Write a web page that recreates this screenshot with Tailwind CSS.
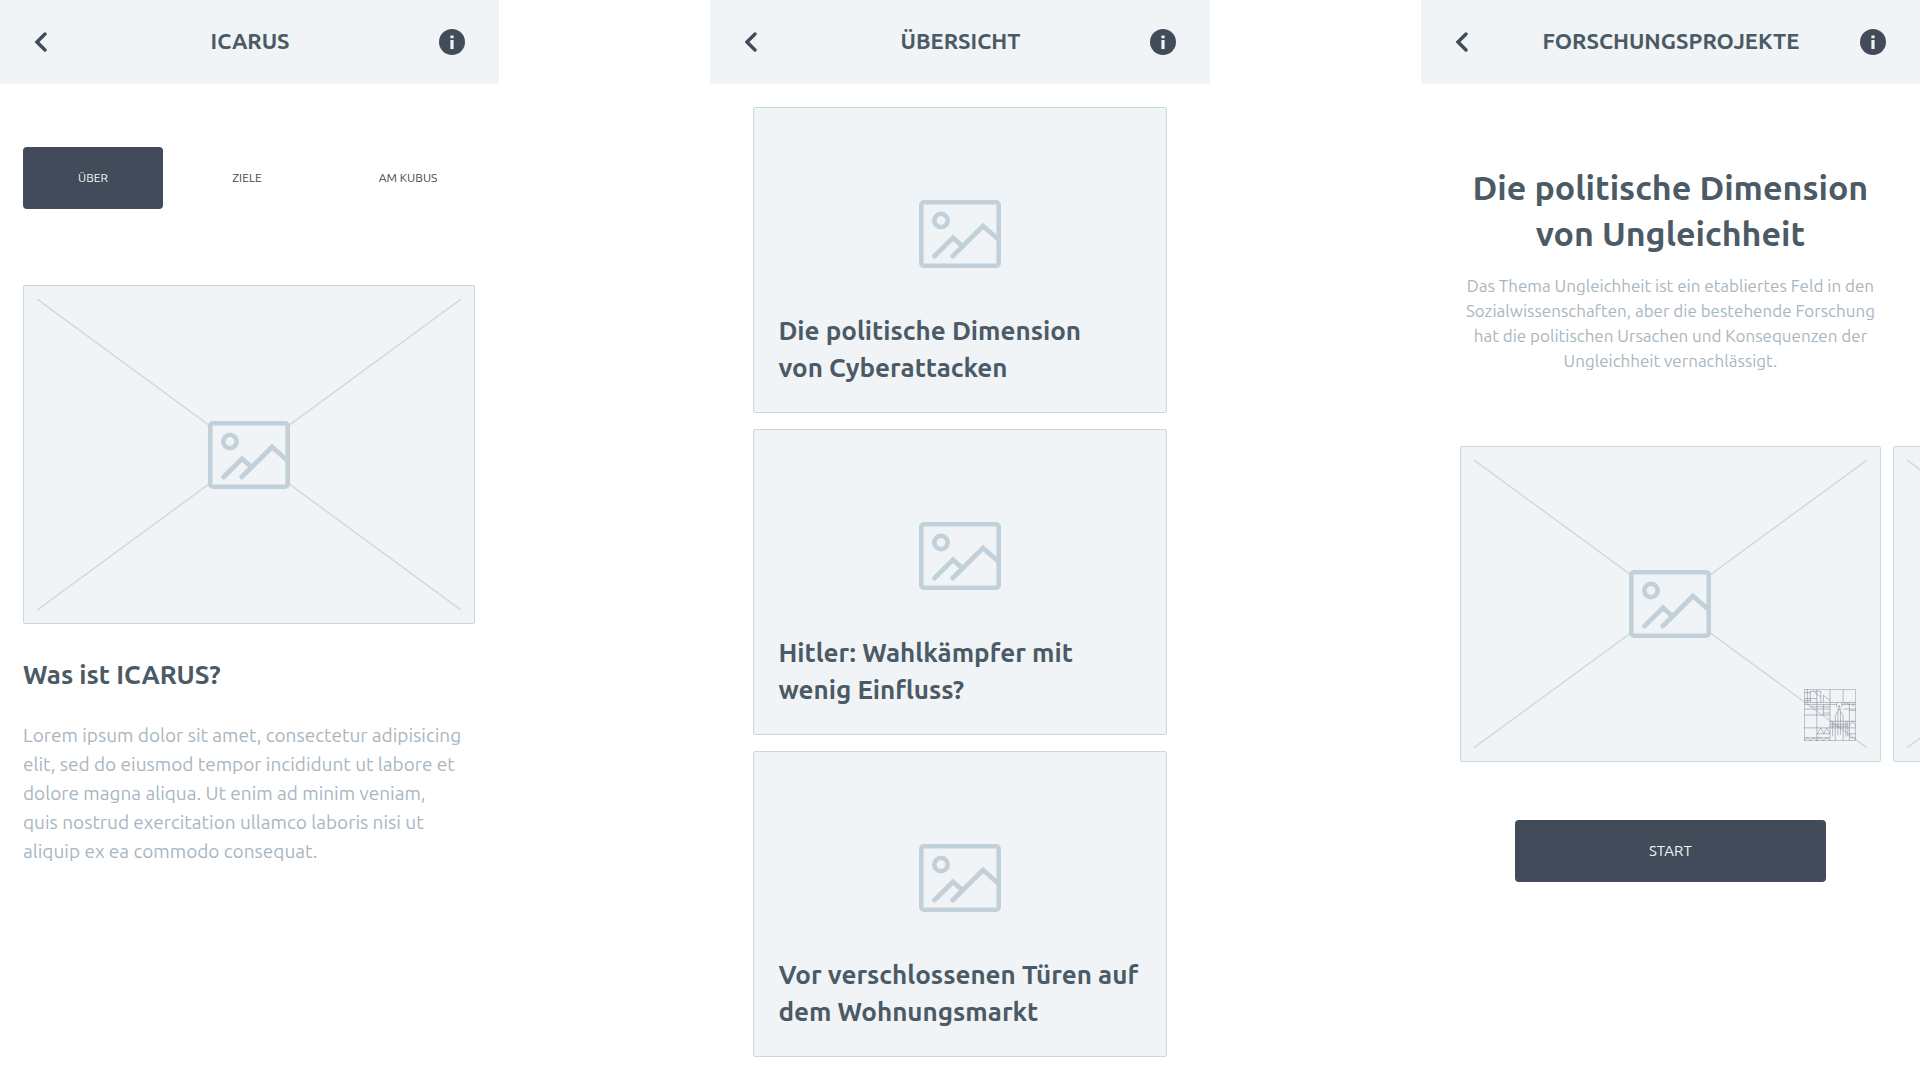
<!DOCTYPE html>
<html lang="de">
<head>
    <meta charset="UTF-8">
    <title>ICARUS</title>
    <meta name="viewport" content="width=device-width, initial-scale=1.0">
    <!-- Tailwind CSS CDN -->
    <script src="https://cdn.jsdelivr.net/npm/@tailwindcss/browser@4"></script>
</head>
<body class="bg-white min-h-screen overflow-x-hidden font-['Ubuntu','Noto_Sans',sans-serif] text-[#4b5a65]">
    <!-- Shared icons -->
    <svg class="hidden">
        <symbol id="icon-back" viewBox="0 0 12 20">
            <path d="M10 2 2 10l8 8" fill="none" stroke="#424b5a" stroke-width="3.4" stroke-linecap="round" />
        </symbol>
        <symbol id="icon-info" viewBox="0 0 26 26">
            <circle cx="13" cy="13" r="13" fill="#424b5a" />
            <path d="M11.4 6.6h3.2v2.6h-3.2zM11.4 11h3.2v9h-3.2z" fill="#f0f4f7" />
        </symbol>
        <symbol id="icon-image" viewBox="0 0 82 68">
            <rect x="2.3" y="2.3" width="77.4" height="63.4" rx="2.5" fill="#f0f4f7" stroke="#c1d0d9" stroke-width="4.6" />
            <circle cx="22" cy="20.5" r="6.7" fill="none" stroke="#c1d0d9" stroke-width="4.6" />
            <path d="M15.6 56 34 37.8l9.5 8.4M33.8 56 64 26l16 14" fill="none" stroke="#c1d0d9" stroke-width="4.8" stroke-linecap="round" />
        </symbol>
        <symbol id="kubus" viewBox="-1 -1 158 158">
            <g fill="none" stroke="#5c606f" stroke-opacity=".6" stroke-width="2">
                <path d="M0 0h156v156H0zM38 0v156M78 0v156M118 0v40M118 80v76M0 40h156M0 60h78M118 60h38M0 78h78M0 117h156M136 135h20M38 135h40" />
                <path d="M9 0v40M0 10h20M0 28h38M0 34h20M18 6h32v34M18 6v34M28 6l22 18M58 40V18l20 16M0 46h98M18 53h60M58 46v32M58 72h20" />
                <path d="M114 46h42M98 40v14M114 40v14M106 48l-4 16M106 48l4 16M118 46l8-6 10 6M137 40v116M137 64h19M148 40v12" />
                <path d="M106 60 94 80v76M106 60l12 20M102 68v70M110 68v70M86 97v46M126 97v46M132 97v46M78 97h78M78 106h54M78 112h54M137 110l9-14 10 14" />
                <path d="M40 135l10-18 9 18M59 135l9-18 10 18M0 156q9-16 18 0q9-16 20 0q9-16 20 0q9-16 20 0M0 147h78M137 147h19" />
            </g>
        </symbol>
    </svg>

    <div class="flex items-start justify-between">

        <!-- Screen 1: Icarus -->
        <section class="w-[26%]">
            <header class="grid h-21 grid-cols-[26px_1fr_26px] items-center bg-[#f0f4f7] pr-[34px] pl-[35px]">
                <button type="button" aria-label="Zurück"><svg class="h-5 w-3"><use href="#icon-back" /></svg></button>
                <h1 class="pb-[3px] text-center text-[22px] font-bold">ICARUS</h1>
                <button type="button" aria-label="Info"><svg class="size-[26px]"><use href="#icon-info" /></svg></button>
            </header>
            <main class="pr-6 pl-[23px]">
                <nav class="mt-[63px] flex text-[12px] text-[#474747]">
                    <button type="button" class="h-[62px] w-[140px] rounded bg-[#424b5a] text-[#f0f4f7]">ÜBER</button>
                    <button type="button" class="ml-3.5 h-[62px] w-[140px] rounded">ZIELE</button>
                    <button type="button" class="ml-6 h-[62px] flex-1 rounded">AM KUBUS</button>
                </nav>
                <div class="relative mt-[76px] flex aspect-4/3 items-center justify-center rounded-xs border border-[#c9d7df] bg-[#f0f4f7]">
                    <svg class="absolute inset-[13px] h-[calc(100%-26px)] w-[calc(100%-26px)]" viewBox="0 0 100 100" preserveAspectRatio="none">
                        <path d="M0 0 100 100M100 0 0 100" stroke="#cedbe1" stroke-width="1.5" vector-effect="non-scaling-stroke" />
                    </svg>
                    <svg class="relative h-[68px] w-[82px]"><use href="#icon-image" /></svg>
                </div>
                <h2 class="mt-8 text-[26px] leading-[37px] font-bold">Was ist ICARUS?</h2>
                <p class="mt-7 text-[19px] leading-[29px] whitespace-nowrap text-[#a9b6bf]">
                    Lorem ipsum dolor sit amet, consectetur adipisicing<br>
                    elit, sed do eiusmod tempor incididunt ut labore et<br>
                    dolore magna aliqua. Ut enim ad minim veniam,<br>
                    quis nostrud exercitation ullamco laboris nisi ut<br>
                    aliquip ex ea commodo consequat.
                </p>
            </main>
        </section>

        <!-- Screen 2: Übersicht -->
        <section class="w-[26%]">
            <header class="grid h-21 grid-cols-[26px_1fr_26px] items-center bg-[#f0f4f7] pr-[34px] pl-[35px]">
                <button type="button" aria-label="Zurück"><svg class="h-5 w-3"><use href="#icon-back" /></svg></button>
                <h1 class="pb-[3px] text-center text-[22px] font-bold">ÜBERSICHT</h1>
                <button type="button" aria-label="Info"><svg class="size-[26px]"><use href="#icon-info" /></svg></button>
            </header>
            <main class="flex flex-col gap-4 px-[43px] pt-[23px]">
                <a href="#cyberattacken" class="rounded-xs border border-[#c9d7df] bg-[#f0f4f7] px-6 pt-[92px] pb-[26px]">
                    <svg class="mx-auto h-[68px] w-[82px]"><use href="#icon-image" /></svg>
                    <h2 class="mt-11 text-[26px] leading-[37px] font-bold whitespace-nowrap">Die politische Dimension<br>von Cyberattacken</h2>
                </a>
                <a href="#wahlkaempfer" class="rounded-xs border border-[#c9d7df] bg-[#f0f4f7] px-6 pt-[92px] pb-[26px]">
                    <svg class="mx-auto h-[68px] w-[82px]"><use href="#icon-image" /></svg>
                    <h2 class="mt-11 text-[26px] leading-[37px] font-bold whitespace-nowrap">Hitler: Wahlkämpfer mit<br>wenig Einfluss?</h2>
                </a>
                <a href="#wohnungsmarkt" class="rounded-xs border border-[#c9d7df] bg-[#f0f4f7] px-6 pt-[92px] pb-[26px]">
                    <svg class="mx-auto h-[68px] w-[82px]"><use href="#icon-image" /></svg>
                    <h2 class="mt-11 text-[26px] leading-[37px] font-bold whitespace-nowrap">Vor verschlossenen Türen auf<br>dem Wohnungsmarkt</h2>
                </a>
            </main>
        </section>

        <!-- Screen 3: Forschungsprojekte -->
        <section class="w-[26%]">
            <header class="grid h-21 grid-cols-[26px_1fr_26px] items-center bg-[#f0f4f7] pr-[34px] pl-[35px]">
                <button type="button" aria-label="Zurück"><svg class="h-5 w-3"><use href="#icon-back" /></svg></button>
                <h1 class="pb-[3px] text-center text-[22px] font-bold">FORSCHUNGSPROJEKTE</h1>
                <button type="button" aria-label="Info"><svg class="size-[26px]"><use href="#icon-info" /></svg></button>
            </header>
            <main class="text-center">
                <h2 class="mt-20 text-[34px] leading-[46px] font-bold whitespace-nowrap">Die politische Dimension<br>von Ungleichheit</h2>
                <p class="mt-[17px] text-[17px] leading-[25px] whitespace-nowrap text-[#a9b6bf]">
                    Das Thema Ungleichheit ist ein etabliertes Feld in den<br>
                    Sozialwissenschaften, aber die bestehende Forschung<br>
                    hat die politischen Ursachen und Konsequenzen der<br>
                    Ungleichheit vernachlässigt.
                </p>
                <div class="mt-[73px] flex gap-3 overflow-hidden pl-[39px]">
                    <div class="relative flex aspect-4/3 w-[421px] shrink-0 items-center justify-center rounded-xs border border-[#c9d7df] bg-[#f0f4f7]">
                        <svg class="absolute inset-[13px] h-[calc(100%-26px)] w-[calc(100%-26px)]" viewBox="0 0 100 100" preserveAspectRatio="none">
                            <path d="M0 0 100 100M100 0 0 100" stroke="#cedbe1" stroke-width="1.5" vector-effect="non-scaling-stroke" />
                        </svg>
                        <svg class="relative h-[68px] w-[82px]"><use href="#icon-image" /></svg>
                        <svg class="absolute right-6 bottom-5 size-[52px]"><use href="#kubus" /></svg>
                    </div>
                    <div class="relative flex aspect-4/3 w-[421px] shrink-0 items-center justify-center rounded-xs border border-[#c9d7df] bg-[#f0f4f7]">
                        <svg class="absolute inset-[13px] h-[calc(100%-26px)] w-[calc(100%-26px)]" viewBox="0 0 100 100" preserveAspectRatio="none">
                            <path d="M0 0 100 100M100 0 0 100" stroke="#cedbe1" stroke-width="1.5" vector-effect="non-scaling-stroke" />
                        </svg>
                        <svg class="relative h-[68px] w-[82px]"><use href="#icon-image" /></svg>
                    </div>
                </div>
                <button type="button" class="mt-[58px] h-[62px] w-[311px] rounded bg-[#424b5a] text-[15px] text-[#f0f4f7]">START</button>
            </main>
        </section>

    </div>
</body>
</html>
